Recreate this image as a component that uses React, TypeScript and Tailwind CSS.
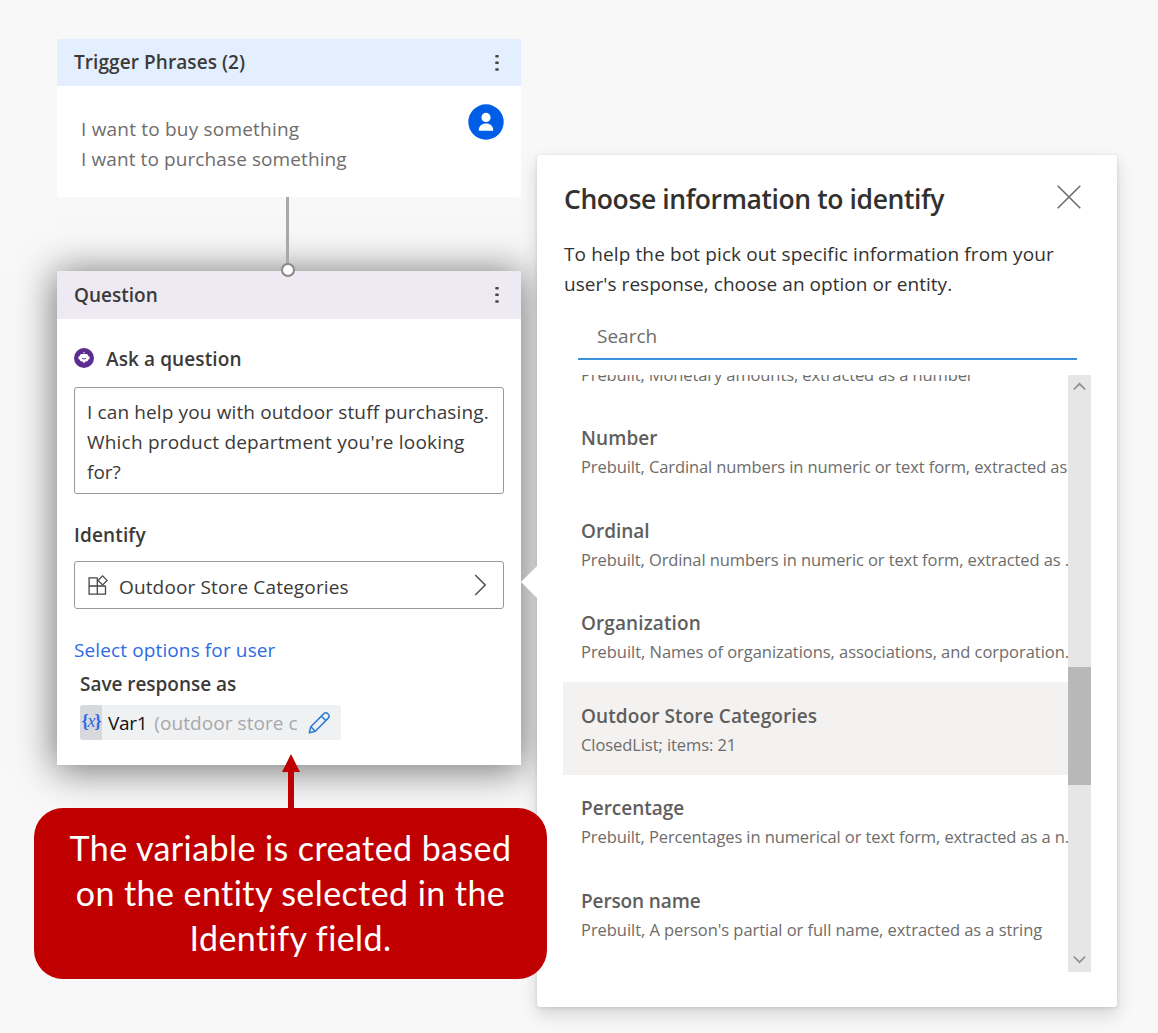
import type { ReactNode } from "react";

const entities = [
  { name: "Money", detail: "Prebuilt, Monetary amounts, extracted as a number", nameTracking: "", tracking: "tracking-[-0.11px]" },
  { name: "Number", detail: "Prebuilt, Cardinal numbers in numeric or text form, extracted as", nameTracking: "tracking-[0.1px]", tracking: "tracking-[-0.1px]" },
  { name: "Ordinal", detail: "Prebuilt, Ordinal numbers in numeric or text form, extracted as .", nameTracking: "", tracking: "tracking-[-0.1px]" },
  { name: "Organization", detail: "Prebuilt, Names of organizations, associations, and corporation.", nameTracking: "tracking-[0.1px]", tracking: "tracking-[-0.04px]" },
  { name: "Outdoor Store Categories", detail: "ClosedList; items: 21", nameTracking: "tracking-[0.1px]", tracking: "tracking-[-0.08px]", selected: true },
  { name: "Percentage", detail: "Prebuilt, Percentages in numerical or text form, extracted as a n.", nameTracking: "", tracking: "tracking-[-0.1px]" },
  { name: "Person name", detail: "Prebuilt, A person's partial or full name, extracted as a string", nameTracking: "tracking-[-0.12px]", tracking: "tracking-[-0.05px]" },
];

function MoreDots() {
  return (
    <svg className="h-[20px] w-[6px]" viewBox="0 0 6 20" fill="#484644">
      <rect x="1.2" y="2" width="3.6" height="2.5" rx=".9" />
      <rect x="1.2" y="8.6" width="3.6" height="2.5" rx=".9" />
      <rect x="1.2" y="15.2" width="3.6" height="2.5" rx=".9" />
    </svg>
  );
}

function CardHeader({ children, className }: { children: ReactNode; className: string }) {
  return (
    <div className={`flex items-center justify-between pr-[21px] pl-[17px] font-semibold text-[#3b3a39] ${className}`}>
      {children}
      <MoreDots />
    </div>
  );
}

function UserAvatar() {
  return (
    <svg className="h-[36px] w-[36px]" viewBox="0 0 36 36">
      <circle cx="18" cy="18" r="17.7" fill="#005ee6" />
      <circle cx="18" cy="13.4" r="4.6" fill="#fff" />
      <path d="M10.800 26.800v-.9c0-3.800 3.200-6.400 7.200-6.400s7.200 2.600 7.200 6.400v.9z" fill="#fff" />
    </svg>
  );
}

function BotIcon() {
  return (
    <svg className="h-[20px] w-[20px]" viewBox="0 0 20 20">
      <circle cx="10" cy="10" r="10" fill="#5c2d91" />
      <circle cx="10" cy="4.700" r=".9" fill="#c9b8dc" />
      <rect x="5.800" y="6" width="8.400" height="7.600" rx="2" fill="#fff" />
      <rect x="4.500" y="8" width="11" height="3.400" rx="1.200" fill="#fff" />
      <path d="M8.400 13h3.200L10 15.400z" fill="#fff" />
      <path d="M8 10.200q2 1.700 4 0" fill="none" stroke="#5c2d91" strokeWidth=".9" />
    </svg>
  );
}

function EntityIcon() {
  return (
    <svg className="h-[21px] w-[20px]" viewBox="0 0 20 21" fill="none" stroke="#484644" strokeWidth="1.300">
      <path d="M9.600 2.800H1.100v16.400h16.400v-8.200M1.100 11h16.400M9.300 2.800v16.400" />
      <path d="M14.600.9l4.500 4.500-4.500 4.500-4.500-4.500z" />
    </svg>
  );
}

function PencilIcon() {
  return (
    <svg className="h-[22px] w-[22px]" viewBox="0 0 22 22" fill="none" stroke="#2b7cd3" strokeWidth="1.500" strokeLinejoin="round">
      <path d="M1.300 20.700l1.500-6L15.600 1.900a2.800 2.800 0 0 1 4.400 4.500L7.300 19.200z" />
      <path d="M13.400 4.200l4.400 4.400M2.800 14.700l4.500 4.500" />
    </svg>
  );
}

function TriggerCard() {
  return (
    <section className="h-[158px] overflow-hidden rounded-[2px] bg-white">
      <CardHeader className="h-[47px] bg-[#e3effe] tracking-[0.08px]">
        <span className="-mt-px">Trigger Phrases (2)</span>
      </CardHeader>
      <div className="flex justify-between pr-[17px] pl-[24px]">
        <div className="pt-[28px] leading-[30px] text-[#6e6d6c]">
          <p className="tracking-[0.2px]">I want to buy something</p>
          <p className="tracking-[0.1px]">I want to purchase something</p>
        </div>
        <div className="pt-[18px]">
          <UserAvatar />
        </div>
      </div>
    </section>
  );
}

function QuestionCard() {
  return (
    <section className="h-[494px] bg-white shadow-[0_3px_36px_2px_rgba(0,0,0,0.54)]">
      <CardHeader className="h-[48px] bg-[#eeeaf4]">
        <span>Question</span>
      </CardHeader>
      <div className="px-[17px] pt-[25px] leading-[30px] text-[#3b3a39]">
        <div className="flex h-[30px] items-center gap-[12px] font-semibold">
          <span className="-mt-[2px]">
            <BotIcon />
          </span>
          <span className="tracking-[0.1px]">Ask a question</span>
        </div>
        <div className="mt-[13px] h-[107px] w-[430px] rounded-[3px] border border-[#9b9997] pt-[9px] pl-[12px] whitespace-nowrap">
          <p className="tracking-[0.13px]">I can help you with outdoor stuff purchasing.</p>
          <p className="tracking-[0.2px]">Which product department you're looking</p>
          <p>for?</p>
        </div>
        <p className="mt-[26px] font-semibold tracking-[0.15px]">Identify</p>
        <div className="mt-[11px] flex h-[48px] w-[430px] items-center rounded-[3px] border border-[#9b9997] pr-[16px] pl-[13px]">
          <EntityIcon />
          <span className="mt-[4px] ml-[11px] grow tracking-[0.14px]">Outdoor Store Categories</span>
          <svg className="h-[22px] w-[13px]" viewBox="0 0 13 22" fill="none" stroke="#555" strokeWidth="1.600">
            <path d="M1.200 1l10 10-10 10" />
          </svg>
        </div>
        <p className="mt-[26px] tracking-[0.12px] text-[#2f6ae6]">Select options for user</p>
        <p className="mt-[4px] pl-[6px] font-semibold tracking-[-0.04px]">Save response as</p>
        <div className="mt-[6px] ml-[6px] flex h-[35px] w-[261px] items-center overflow-hidden rounded-[3px] bg-[#f0f1f3]">
          <span className="flex h-full w-[22px] items-center justify-center bg-[#d8d9dd] pb-[4px] font-['Liberation_Serif'] text-[18px] font-bold tracking-[-1px] text-[#2f6ae6]">
            <span>
              {"{"}
              <i className="font-normal">x</i>
              {"}"}
            </span>
          </span>
          <span className="ml-[6px] tracking-[-0.3px] text-[#111]">Var1</span>
          <span className="ml-[7px] w-[146px] tracking-[0.06px] whitespace-nowrap text-[#a7a8aa]">(outdoor store c</span>
          <span className="ml-[8px]">
            <PencilIcon />
          </span>
        </div>
      </div>
    </section>
  );
}

function EntityList() {
  return (
    <div className="mt-[15px] flex h-[597px] w-[528px] overflow-hidden">
      <div className="w-[505px] overflow-hidden">
        <ul className="-mt-[62.7px]">
          {entities.map((e) => (
            <li
              key={e.name}
              className={`h-[92.5px] pt-[18.2px] pl-[18px] whitespace-nowrap text-[#605e5c] ${e.selected ? "bg-[#f3f2f1]" : ""}`}
            >
              <p className={`leading-[30px] font-semibold ${e.nameTracking}`}>{e.name}</p>
              <p className={`mt-[2px] text-[16.5px] leading-[24px] text-[#6e6c6a] ${e.tracking}`}>{e.detail}</p>
            </li>
          ))}
        </ul>
      </div>
      <div className="flex w-[23px] flex-col items-center bg-[#e6e6e6]">
        <svg className="mt-[7px] h-[9px] w-[13px]" viewBox="0 0 13 9" fill="none" stroke="#8f8f8f" strokeWidth="1.700">
          <path d="M.8 7.500l5.700-5.700 5.700 5.700" />
        </svg>
        <div className="mt-[276px] h-[118px] w-full bg-[#b8b8b8]" />
        <svg className="mt-auto mb-[8px] h-[9px] w-[13px]" viewBox="0 0 13 9" fill="none" stroke="#8f8f8f" strokeWidth="1.700">
          <path d="M.8 1.500l5.700 5.700 5.700-5.700" />
        </svg>
      </div>
    </div>
  );
}

function IdentifyPanel() {
  return (
    <aside className="relative mt-[116px] h-[852px] w-[580px] rounded-[3px] bg-white pt-[26px] pl-[26px] text-[#323130] shadow-[0_8px_18px_rgba(0,0,0,0.14),0_1px_4px_rgba(0,0,0,0.12)]">
      <svg className="absolute top-[410px] -left-[16px] h-[34px] w-[17px]" viewBox="0 0 17 34">
        <path d="M17 0L0 17l17 17z" fill="#fff" />
      </svg>
      <div className="flex items-start justify-between pr-[36px] pl-[1px]">
        <h1 className="text-[26.5px] leading-[36px] font-semibold tracking-[-0.4px]">Choose information to identify</h1>
        <svg className="mt-[4px] h-[24px] w-[24px]" viewBox="0 0 24 24" fill="none" stroke="#6b6967" strokeWidth="1.500">
          <path d="M.7.7l22.600 22.600M23.300.7L.7 23.300" />
        </svg>
      </div>
      <div className="mt-[22px] pl-[1px] leading-[30px] whitespace-nowrap">
        <p className="tracking-[0.12px]">To help the bot pick out specific information from your</p>
        <p className="tracking-[0.04px]">user's response, choose an option or entity.</p>
      </div>
      <div className="mt-[19px] ml-[15px] h-[42px] w-[499px] border-b-2 border-[#3a92dc] pt-[3px] pl-[19px] leading-[30px] text-[#6e6c6a]">
        Search
      </div>
      <EntityList />
    </aside>
  );
}

function Callout() {
  return (
    <div className="absolute top-[754px] left-[34px] flex w-[513px] flex-col items-center">
      <svg className="h-[55px] w-[18px]" viewBox="0 0 18 55" fill="#c00000">
        <path d="M9 0l9 18h-6v37H6V18H0z" />
      </svg>
      <div className="-mt-px h-[171px] w-full rounded-[29px] bg-[#c00000] pt-[17px] text-center font-['Lato'] text-[34px] leading-[45px] tracking-[0.43px] text-white">
        <p>The variable is created based</p>
        <p>on the entity selected in the</p>
        <p>Identify field.</p>
      </div>
    </div>
  );
}

export default function App() {
  return (
    <main className="relative flex h-[1033px] w-[1158px] items-start gap-[16px] overflow-hidden bg-[#f8f8f8] pt-[39px] pl-[57px] font-['Open_Sans',sans-serif] text-[19px]">
      <div className="flex w-[464px] flex-col">
        <TriggerCard />
        <div className="relative z-10 flex h-[74px] flex-col items-center pr-[3px]">
          <div className="w-[3px] shrink-0 grow bg-[#a9a9a9]" />
          <div className="-mt-[8px] -mb-[6px] h-[14px] w-[14px] shrink-0 rounded-full border-2 border-[#8a8886] bg-white" />
        </div>
        <QuestionCard />
      </div>
      <IdentifyPanel />
      <Callout />
    </main>
  );
}
